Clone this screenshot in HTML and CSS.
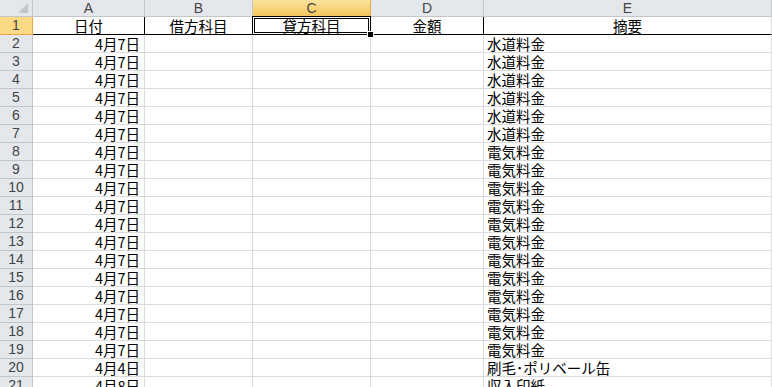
FILE: index.html
```html
<!DOCTYPE html>
<html lang="ja">
<head>
    <meta charset="UTF-8">
    <title>Sheet1</title>
    <link rel="stylesheet" href="styles.css">
</head>
<body>

<div class="sheet">
    <div class="row head">
        <div class="corner"><span class="tri"></span></div>
        <div class="col">A</div>
        <div class="col">B</div>
        <div class="col on">C</div>
        <div class="col">D</div>
        <div class="col">E</div>
    </div>

    <!-- title row -->
    <div class="row titles">
        <div class="num on">1</div>
        <div class="c">日付</div>
        <div class="c">借方科目</div>
        <div class="c current">貸方科目<span class="sel"></span><span class="handle"></span></div>
        <div class="c">金額</div>
        <div class="c">摘要</div>
    </div>

    <div class="row"><div class="num">2</div><div class="c date">4月7日</div><div class="c"></div><div class="c"></div><div class="c"></div><div class="c memo">水道料金</div></div>
    <div class="row"><div class="num">3</div><div class="c date">4月7日</div><div class="c"></div><div class="c"></div><div class="c"></div><div class="c memo">水道料金</div></div>
    <div class="row"><div class="num">4</div><div class="c date">4月7日</div><div class="c"></div><div class="c"></div><div class="c"></div><div class="c memo">水道料金</div></div>
    <div class="row"><div class="num">5</div><div class="c date">4月7日</div><div class="c"></div><div class="c"></div><div class="c"></div><div class="c memo">水道料金</div></div>
    <div class="row"><div class="num">6</div><div class="c date">4月7日</div><div class="c"></div><div class="c"></div><div class="c"></div><div class="c memo">水道料金</div></div>
    <div class="row"><div class="num">7</div><div class="c date">4月7日</div><div class="c"></div><div class="c"></div><div class="c"></div><div class="c memo">水道料金</div></div>
    <div class="row"><div class="num">8</div><div class="c date">4月7日</div><div class="c"></div><div class="c"></div><div class="c"></div><div class="c memo">電気料金</div></div>
    <div class="row"><div class="num">9</div><div class="c date">4月7日</div><div class="c"></div><div class="c"></div><div class="c"></div><div class="c memo">電気料金</div></div>
    <div class="row"><div class="num">10</div><div class="c date">4月7日</div><div class="c"></div><div class="c"></div><div class="c"></div><div class="c memo">電気料金</div></div>
    <div class="row"><div class="num">11</div><div class="c date">4月7日</div><div class="c"></div><div class="c"></div><div class="c"></div><div class="c memo">電気料金</div></div>
    <div class="row"><div class="num">12</div><div class="c date">4月7日</div><div class="c"></div><div class="c"></div><div class="c"></div><div class="c memo">電気料金</div></div>
    <div class="row"><div class="num">13</div><div class="c date">4月7日</div><div class="c"></div><div class="c"></div><div class="c"></div><div class="c memo">電気料金</div></div>
    <div class="row"><div class="num">14</div><div class="c date">4月7日</div><div class="c"></div><div class="c"></div><div class="c"></div><div class="c memo">電気料金</div></div>
    <div class="row"><div class="num">15</div><div class="c date">4月7日</div><div class="c"></div><div class="c"></div><div class="c"></div><div class="c memo">電気料金</div></div>
    <div class="row"><div class="num">16</div><div class="c date">4月7日</div><div class="c"></div><div class="c"></div><div class="c"></div><div class="c memo">電気料金</div></div>
    <div class="row"><div class="num">17</div><div class="c date">4月7日</div><div class="c"></div><div class="c"></div><div class="c"></div><div class="c memo">電気料金</div></div>
    <div class="row"><div class="num">18</div><div class="c date">4月7日</div><div class="c"></div><div class="c"></div><div class="c"></div><div class="c memo">電気料金</div></div>
    <div class="row"><div class="num">19</div><div class="c date">4月7日</div><div class="c"></div><div class="c"></div><div class="c"></div><div class="c memo">電気料金</div></div>
    <div class="row"><div class="num">20</div><div class="c date">4月4日</div><div class="c"></div><div class="c"></div><div class="c"></div><div class="c memo">刷毛･ポリベール缶</div></div>
    <div class="row"><div class="num">21</div><div class="c date">4月8日</div><div class="c"></div><div class="c"></div><div class="c"></div><div class="c memo">収入印紙</div></div>
</div>

</body>
</html>
```

FILE: styles.css
```css
body {
    margin: 0;
    padding: 0;
    background: #fff;
    overflow: hidden;
    font-family: "Noto Sans CJK JP", sans-serif;
}

.sheet {
    width: 772px;
    height: 387px;
    overflow: hidden;
}

.row {
    display: grid;
    grid-template-columns: 33px 112px 108px 118px 113px 1fr;
    height: 18px;
}

.row > div {
    box-sizing: border-box;
    border-right: 1px solid #dadcdd;
    border-bottom: 1px solid #dadcdd;
    font-size: 14.5px;
    line-height: 17px;
    color: #000;
    white-space: nowrap;
}

/* column + row headers */
.row.head {
    height: 17px;
}

.row.head > div,
.row > .num {
    background: #e4e7eb;
    border-color: #c2c6cb;
    color: #444;
    font-family: "Liberation Sans", sans-serif;
    font-size: 14px;
    line-height: 17px;
    text-align: center;
}

.row.head > .col {
    line-height: 16px;
}

.row.head > .on {
    background: linear-gradient(#fbe39b, #f5c65c);
    border-color: #e7a84a;
}

.row > .num.on {
    background: #fcd985;
    border-color: #e7a84a;
}

.corner {
    position: relative;
}

.tri {
    position: absolute;
    right: 4px;
    bottom: 3px;
    width: 0;
    height: 0;
    border-left: 10px solid transparent;
    border-bottom: 10px solid #c3c6ca;
}

/* title row */
.titles > .c {
    text-align: center;
    border-right-color: #000;
    border-bottom-color: #000;
}

.titles > .c:last-child {
    border-right-color: #dadcdd;
}

.current {
    position: relative;
}

.sel {
    position: absolute;
    top: -1px;
    left: -1px;
    right: -1px;
    bottom: -1px;
    border: 3px double #000;
}

.handle {
    position: absolute;
    right: -4px;
    bottom: -4px;
    width: 5px;
    height: 5px;
    background: #000;
    border: 1px solid #fff;
    z-index: 2;
}

.date {
    text-align: right;
    padding-right: 4px;
}

.memo {
    padding-left: 3px;
}
```
